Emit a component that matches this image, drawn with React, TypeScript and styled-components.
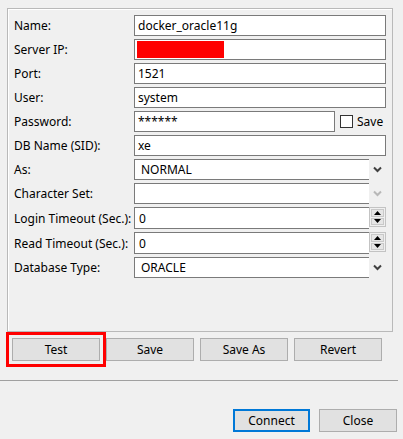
import { FC } from 'react'
import styled, { createGlobalStyle } from 'styled-components'

const GlobalStyle = createGlobalStyle`
  html, body {
    margin: 0;
    padding: 0;
    background: #f0f0f0;
  }
  body {
    font-family: 'Noto Sans', 'Open Sans', sans-serif;
    font-size: 12px;
    color: #000;
  }
`

const Window = styled.div`
  width: 403px;
  height: 439px;
  background: #f0f0f0;
  display: flex;
  flex-direction: column;
  overflow: hidden;
`

const Panel = styled.div`
  box-sizing: border-box;
  margin: 8px 0 0 7px;
  width: 386px;
  height: 324px;
  border: 1px solid #b9b9b9;
  box-shadow: inset 1px 1px 0 #ffffff;
  padding: 6px 6px 0 6px;
`

const Form = styled.div`
  display: grid;
  grid-template-columns: 120px 252px;
  row-gap: 3px;
`

const Label = styled.div<{ $tall?: boolean }>`
  height: ${(p) => (p.$tall ? 22 : 21)}px;
  display: flex;
  align-items: center;
  white-space: nowrap;
`

const Field = styled.div`
  display: flex;
  align-items: center;
  height: 100%;
`

const TextBox = styled.div<{ $width?: number }>`
  box-sizing: border-box;
  width: ${(p) => (p.$width ? `${p.$width}px` : '100%')};
  height: 21px;
  border: 1px solid #7a7a7a;
  background: #fff;
  padding: 0 3px;
  display: flex;
  align-items: center;
  white-space: nowrap;
`

const Redacted = styled.div`
  width: 87px;
  height: 17px;
  background: #ff0000;
  margin-left: -1px;
`

const CheckWrap = styled.label`
  display: flex;
  align-items: center;
  margin-left: 5px;
  gap: 4px;
`

const CheckBox = styled.span`
  box-sizing: border-box;
  width: 13px;
  height: 13px;
  border: 1px solid #333;
  background: #fff;
`

const Combo = styled.div`
  display: flex;
  width: 100%;
  height: 21px;
`

const ComboText = styled.div`
  box-sizing: border-box;
  flex: 1;
  height: 21px;
  background: #fff;
  border: 1px solid #7a7a7a;
  border-right: none;
  padding: 0 6px;
  display: flex;
  align-items: center;
`

const ComboArrow = styled.div`
  width: 17px;
  display: flex;
  align-items: center;
  justify-content: center;
`

const SpinBox = styled.div`
  display: flex;
  width: 100%;
  height: 22px;
`

const SpinText = styled(ComboText)`
  height: 22px;
  padding: 0 4px;
`

const Spinner = styled.div`
  box-sizing: border-box;
  width: 17px;
  height: 20px;
  margin-top: 0;
  border: 1px solid #c3c3c3;
  padding: 1px;
  display: flex;
  flex-direction: column;
  gap: 1px;
`

const SpinButton = styled.div`
  flex: 1;
  background: #e6e6e6;
  border: 1px solid #c9c9c9;
  display: flex;
  align-items: center;
  justify-content: center;
`

const ButtonRow = styled.div`
  display: flex;
  gap: 6px;
  padding-left: 12px;
  margin-top: 6px;
`

const Button = styled.button<{ $width?: number; $default?: boolean; $marked?: boolean }>`
  box-sizing: border-box;
  width: ${(p) => p.$width ?? 88}px;
  height: 23px;
  padding: 0;
  font: inherit;
  color: #000;
  background: #e1e1e1;
  border: ${(p) => (p.$default ? '2px solid #0078d7' : '1px solid #adadad')};
  outline: ${(p) => (p.$marked ? '3px solid #ff0000' : 'none')};
  outline-offset: 3px;
`

const Separator = styled.div`
  width: 398px;
  height: 1px;
  background: #a0a0a0;
  margin-top: 19px;
`

const Footer = styled.div`
  display: flex;
  justify-content: flex-end;
  gap: 9px;
  padding-right: 6px;
  margin-top: 28px;
`

const Chevron: FC<{ disabled?: boolean }> = ({ disabled }) => (
  <svg width="9" height="7" viewBox="0 0 9 7">
    <polyline
      points="1,1.5 4.5,5 8,1.5"
      fill="none"
      stroke={disabled ? '#b8b8b8' : '#404040'}
      strokeWidth="2"
    />
  </svg>
)

const Tri: FC<{ up?: boolean }> = ({ up }) => (
  <svg width="7" height="4" viewBox="0 0 7 4">
    <polygon points={up ? '0,4 7,4 3.5,0' : '0,0 7,0 3.5,4'} fill="#000" />
  </svg>
)

const ComboField: FC<{ value?: string; disabled?: boolean }> = ({ value, disabled }) => (
  <Combo>
    <ComboText>{value}</ComboText>
    <ComboArrow>
      <Chevron disabled={disabled} />
    </ComboArrow>
  </Combo>
)

const SpinField: FC<{ value: string }> = ({ value }) => (
  <SpinBox>
    <SpinText>{value}</SpinText>
    <Spinner>
      <SpinButton>
        <Tri up />
      </SpinButton>
      <SpinButton>
        <Tri />
      </SpinButton>
    </Spinner>
  </SpinBox>
)

export default function App() {
  return (
    <Window>
      <GlobalStyle />
      <Panel>
        <Form>
          <Label>Name:</Label>
          <Field>
            <TextBox>docker_oracle11g</TextBox>
          </Field>

          <Label>Server IP:</Label>
          <Field>
            <TextBox>
              <Redacted />
            </TextBox>
          </Field>

          <Label>Port:</Label>
          <Field>
            <TextBox>1521</TextBox>
          </Field>

          <Label>User:</Label>
          <Field>
            <TextBox>system</TextBox>
          </Field>

          <Label>Password:</Label>
          <Field>
            <TextBox $width={201}>******</TextBox>
            <CheckWrap>
              <CheckBox />
              Save
            </CheckWrap>
          </Field>

          <Label>DB Name (SID):</Label>
          <Field>
            <TextBox>xe</TextBox>
          </Field>

          <Label>As:</Label>
          <Field>
            <ComboField value="NORMAL" />
          </Field>

          <Label>Character Set:</Label>
          <Field>
            <ComboField disabled />
          </Field>

          <Label $tall>Login Timeout (Sec.):</Label>
          <Field>
            <SpinField value="0" />
          </Field>

          <Label $tall>Read Timeout (Sec.):</Label>
          <Field>
            <SpinField value="0" />
          </Field>

          <Label>Database Type:</Label>
          <Field>
            <ComboField value="ORACLE" />
          </Field>
        </Form>
      </Panel>

      <ButtonRow>
        <Button $marked>Test</Button>
        <Button>Save</Button>
        <Button>Save As</Button>
        <Button>Revert</Button>
      </ButtonRow>

      <Separator />

      <Footer>
        <Button $width={77} $default>
          Connect
        </Button>
        <Button $width={78}>Close</Button>
      </Footer>
    </Window>
  )
}
